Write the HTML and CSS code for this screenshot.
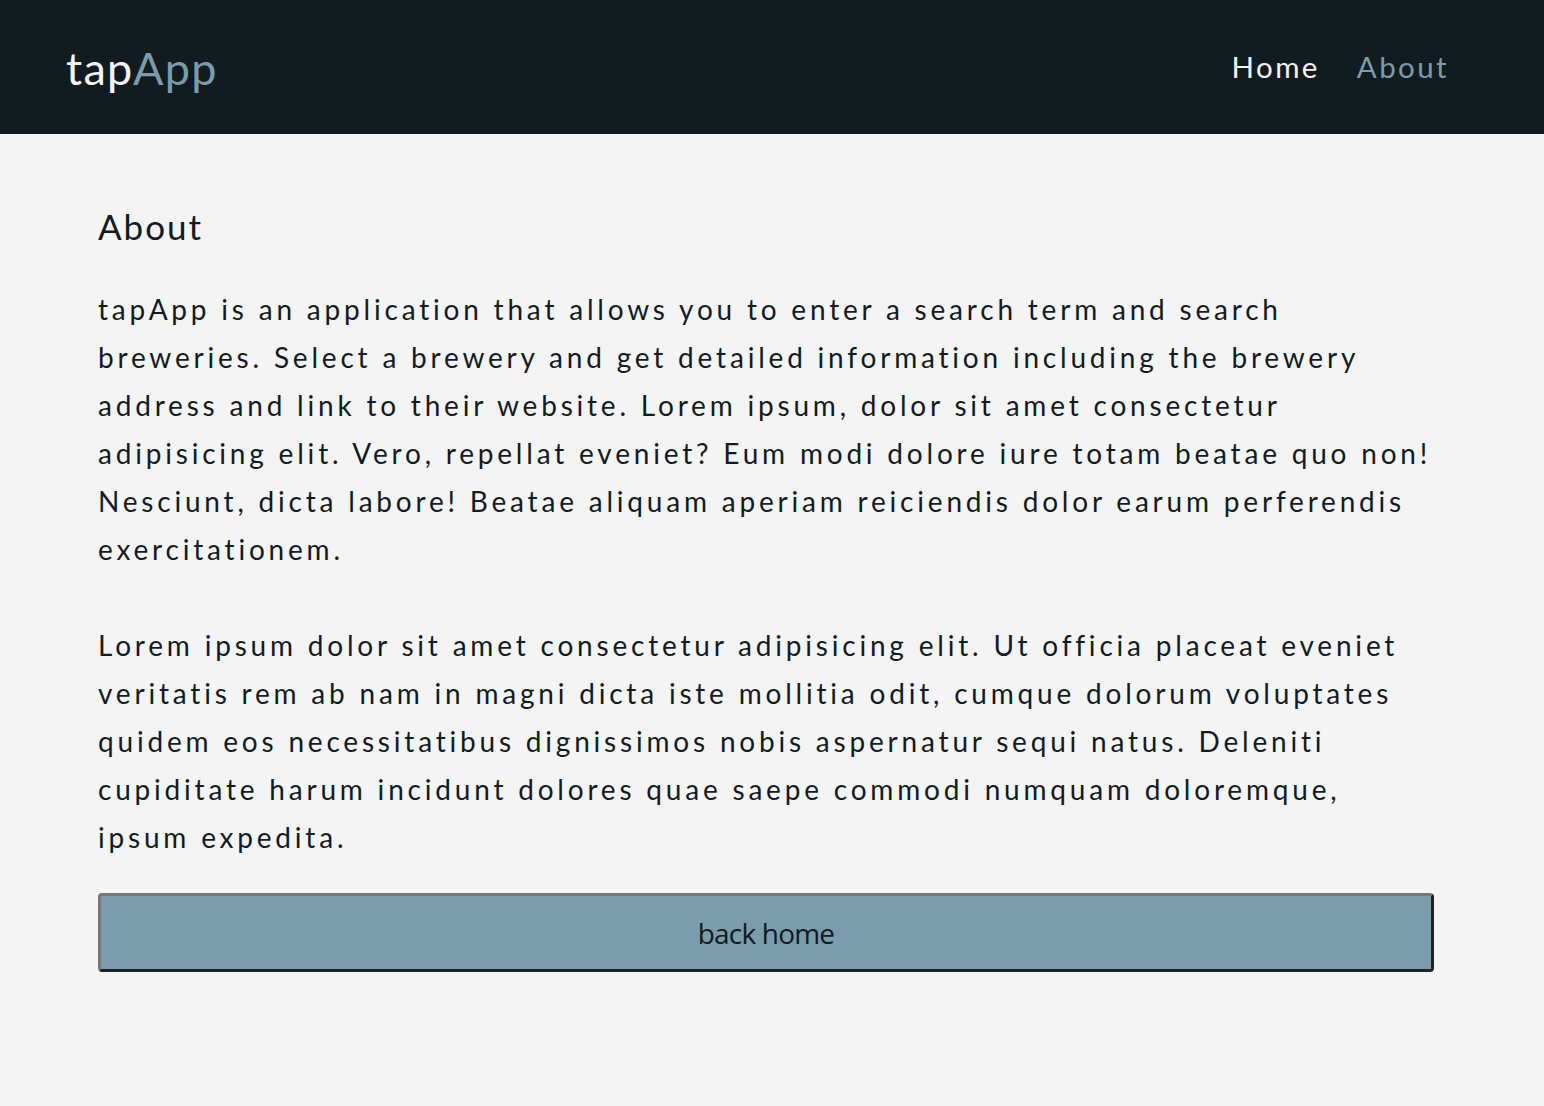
FILE: index.html
```html
<!DOCTYPE html>
<html lang="en">
<head>
<meta charset="utf-8">
<title>tapApp - About</title>
<link rel="stylesheet" href="styles.css">
</head>
<body>
<header class="site-header">
  <a class="logo" href="#"><span class="logo-tap">tap</span><span class="logo-app">App</span></a>
  <nav class="nav">
    <a class="nav-link" href="#">Home</a>
    <a class="nav-link nav-link-active" href="#">About</a>
  </nav>
</header>
<main class="content">
  <h1 class="title">About</h1>
  <p class="text">tapApp is an application that allows you to enter a search term and search breweries. Select a brewery and get detailed information including the brewery address and link to their website. Lorem ipsum, dolor sit amet consectetur adipisicing elit. Vero, repellat eveniet? Eum modi dolore iure totam beatae quo non! Nesciunt, dicta labore! Beatae aliquam aperiam reiciendis dolor earum perferendis exercitationem.</p>
  <p class="text">Lorem ipsum dolor sit amet consectetur adipisicing elit. Ut officia placeat eveniet veritatis rem ab nam in magni dicta iste mollitia odit, cumque dolorum voluptates quidem eos necessitatibus dignissimos nobis aspernatur sequi natus. Deleniti cupiditate harum incidunt dolores quae saepe commodi numquam doloremque, ipsum expedita.</p>
  <button class="back-button" type="button">back home</button>
</main>
</body>
</html>
```
FILE: styles.css
```css
* { box-sizing: border-box; }
html, body { margin: 0; padding: 0; }
body {
  background: #f4f4f4;
  color: #121b1f;
  font-family: Lato, "Open Sans", sans-serif;
  min-height: 1106px;
}
.site-header {
  height: 134px;
  background: #121b1f;
  display: flex;
  align-items: center;
  justify-content: space-between;
  padding: 0 95px 0 66px;
}
.logo {
  text-decoration: none;
  font-size: 45px;
  letter-spacing: 1.3px;
  line-height: 1;
  padding-top: 2px;
}
.logo-tap { color: #f4f4f4; }
.logo-app { color: #7a9cad; }
.nav {
  display: flex;
  gap: 37px;
}
.nav-link {
  color: #f4f4f4;
  text-decoration: none;
  font-size: 29.5px;
  letter-spacing: 2.4px;
  padding-bottom: 2px;
}
.nav-link-active { color: #7a9cad; }
.content {
  padding: 68px 110px 0 98px;
}
.title {
  margin: 0 0 35px;
  font-size: 35px;
  font-weight: 400;
  letter-spacing: 2px;
  line-height: 48px;
}
.text {
  margin: 0 0 48px;
  font-size: 28px;
  line-height: 48px;
  letter-spacing: 3.8px;
}
.text + .text { margin-bottom: 32px; }
.back-button {
  display: block;
  width: 100%;
  height: 79px;
  background: #7a9cad;
  border: 3px solid;
  border-color: #777 #222 #222 #777;
  border-radius: 4px;
  color: #121b1f;
  font-family: "Open Sans", sans-serif;
  font-size: 28px;
  letter-spacing: -0.8px;
  cursor: pointer;
}
```
